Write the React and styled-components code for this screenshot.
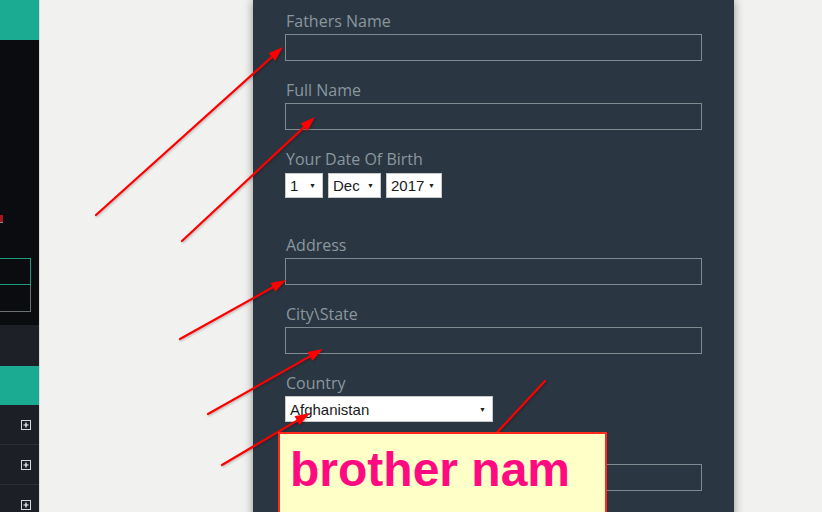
import React from "react";
import styled, { createGlobalStyle } from "styled-components";

const GlobalStyle = createGlobalStyle`
  html, body {
    margin: 0;
    padding: 0;
    overflow: hidden;
  }
  body {
    font-family: "Open Sans", "Liberation Sans", sans-serif;
    background: #f1f1ef;
  }
`;

const arrows = [
  { x1: 96, y1: 215, x2: 283, y2: 47 },
  { x1: 182, y1: 241, x2: 315, y2: 117 },
  { x1: 180, y1: 339, x2: 286, y2: 280 },
  { x1: 208, y1: 414, x2: 323, y2: 349 },
  { x1: 222, y1: 465, x2: 310, y2: 413 },
];

function Arrow({ x1, y1, x2, y2 }) {
  const dx = x2 - x1;
  const dy = y2 - y1;
  const len = Math.hypot(dx, dy);
  const ux = dx / len;
  const uy = dy / len;
  const bx = x2 - ux * 15;
  const by = y2 - uy * 15;
  const nx = -uy * 5;
  const ny = ux * 5;
  const head = `${x2},${y2} ${bx + nx},${by + ny} ${bx - nx},${by - ny}`;
  return (
    <g>
      <line x1={x1} y1={y1} x2={bx + ux * 2} y2={by + uy * 2} />
      <polygon points={head} />
    </g>
  );
}

export default function App() {
  return (
    <>
      <GlobalStyle />
      <Page>
        <Sidebar>
          <Brand />
          <DarkBlock>
            <RedMark />
            <TealBox />
            <GrayBox />
          </DarkBlock>
          <NavStrip />
          <TealStrip />
          {[0, 1, 2].map((i) => (
            <NavRow key={i}>
              <svg width="10" height="10" viewBox="0 0 10 10">
                <rect x="0.5" y="0.5" width="9" height="9" fill="none" stroke="#d8d8dc" />
                <path d="M5 2.5v5M2.5 5h5" stroke="#ffffff" strokeWidth="1.2" />
              </svg>
            </NavRow>
          ))}
        </Sidebar>

        <Main>
          <Panel>
            <Field>
              <Label>Fathers Name</Label>
              <TextBox />
            </Field>
            <Field>
              <Label>Full Name</Label>
              <TextBox />
            </Field>
            <Field $extra>
              <Label>Your Date Of Birth</Label>
              <DateRow>
                <SelectBox $w={38}>
                  <span>1</span>
                  <Caret>▼</Caret>
                </SelectBox>
                <SelectBox $w={53}>
                  <span>Dec</span>
                  <Caret>▼</Caret>
                </SelectBox>
                <SelectBox $w={56}>
                  <span>2017</span>
                  <Caret>▼</Caret>
                </SelectBox>
              </DateRow>
            </Field>
            <Field>
              <Label>Address</Label>
              <TextBox />
            </Field>
            <Field>
              <Label>City\State</Label>
              <TextBox />
            </Field>
            <Field>
              <Label>Country</Label>
              <SelectBox $w={208} $h={26}>
                <span>Afghanistan</span>
                <Caret>▼</Caret>
              </SelectBox>
            </Field>
            <Field>
              <Label />
              <TextBox />
            </Field>
          </Panel>
        </Main>

        <Marks width="822" height="512">
          {arrows.map((a, i) => (
            <Arrow key={i} {...a} />
          ))}
          <line x1="545" y1="381" x2="490" y2="440" />
        </Marks>

        <Callout>brother nam</Callout>
      </Page>
    </>
  );
}

const Page = styled.div`
  position: relative;
  display: flex;
  width: 822px;
  height: 512px;
  overflow: hidden;
  background: #f1f1ef;
`;

const Sidebar = styled.aside`
  display: flex;
  flex-direction: column;
  width: 39px;
  flex-shrink: 0;
  border-right: 1px solid #dcdcda;
  background: #1c2026;

  & > * {
    flex-shrink: 0;
  }
`;

const Brand = styled.div`
  height: 40px;
  background: #1aab92;
`;

const DarkBlock = styled.div`
  display: flex;
  flex-direction: column;
  height: 285px;
  padding-top: 175px;
  box-sizing: border-box;
  background: #0a0c0f;
`;

const RedMark = styled.span`
  display: block;
  width: 3px;
  height: 7px;
  background: #a3141c;
  border-bottom: 1px solid #8a8a8a;
  margin-bottom: 35px;
`;

const TealBox = styled.div`
  width: 32px;
  height: 27px;
  margin-left: -1px;
  box-sizing: border-box;
  border: 1px solid #1c9d80;
`;

const GrayBox = styled.div`
  width: 32px;
  height: 27px;
  margin-left: -1px;
  box-sizing: border-box;
  border: 1px solid #6b7073;
  border-top: none;
`;

const NavStrip = styled.div`
  height: 41px;
  background: #1d2127;
`;

const TealStrip = styled.div`
  height: 39px;
  background: #1aab92;
`;

const NavRow = styled.div`
  display: flex;
  align-items: center;
  justify-content: flex-end;
  height: 40px;
  padding-right: 8px;
  box-sizing: border-box;
  border-bottom: 1px solid #2a2f36;
  background: #1c2026;
`;

const Main = styled.main`
  flex: 1;
  padding-left: 213px;
`;

const Panel = styled.section`
  width: 481px;
  min-height: 600px;
  box-sizing: border-box;
  padding: 11px 32px 0;
  background: #2a3641;
  box-shadow: 0 0 9px rgba(0, 0, 0, 0.4);
  display: flex;
  flex-direction: column;
  gap: 19px;
`;

const Field = styled.div`
  display: flex;
  flex-direction: column;
  margin-bottom: ${(p) => (p.$extra ? "18px" : "0")};
`;

const Label = styled.label`
  display: block;
  height: 20px;
  line-height: 20px;
  margin-bottom: 3px;
  padding-left: 1px;
  font-size: 16px;
  color: #8b979f;
`;

const TextBox = styled.div`
  width: 417px;
  height: 27px;
  box-sizing: border-box;
  border: 1px solid #7f8b91;
`;

const DateRow = styled.div`
  display: flex;
  gap: 5px;
  margin-top: 1px;
`;

const SelectBox = styled.div`
  display: flex;
  align-items: center;
  justify-content: space-between;
  width: ${(p) => p.$w}px;
  height: ${(p) => p.$h || 25}px;
  box-sizing: border-box;
  padding: 0 6px 0 4px;
  background: #ffffff;
  border: 1px solid #c9c9c9;
  font-family: "Liberation Sans", Arial, sans-serif;
  font-size: 15px;
  color: #1a1a1a;
`;

const Caret = styled.span`
  font-size: 7px;
  color: #222;
`;

const Marks = styled.svg`
  position: absolute;
  left: 0;
  top: 0;
  pointer-events: none;
  filter: drop-shadow(1px 1px 1px rgba(0, 0, 0, 0.25));

  line {
    stroke: #ff0000;
    stroke-width: 2.2;
    stroke-linecap: round;
  }
  polygon {
    fill: #ff0000;
  }
`;

const Callout = styled.div`
  position: absolute;
  left: 278px;
  top: 432px;
  width: 329px;
  height: 100px;
  box-sizing: border-box;
  padding: 8px 0 0 10px;
  background: #ffffc8;
  border: 2px solid #ff2a1a;
  font-family: "Liberation Sans", Arial, sans-serif;
  font-weight: bold;
  font-size: 48px;
  line-height: 56px;
  color: #ff0a80;
`;
